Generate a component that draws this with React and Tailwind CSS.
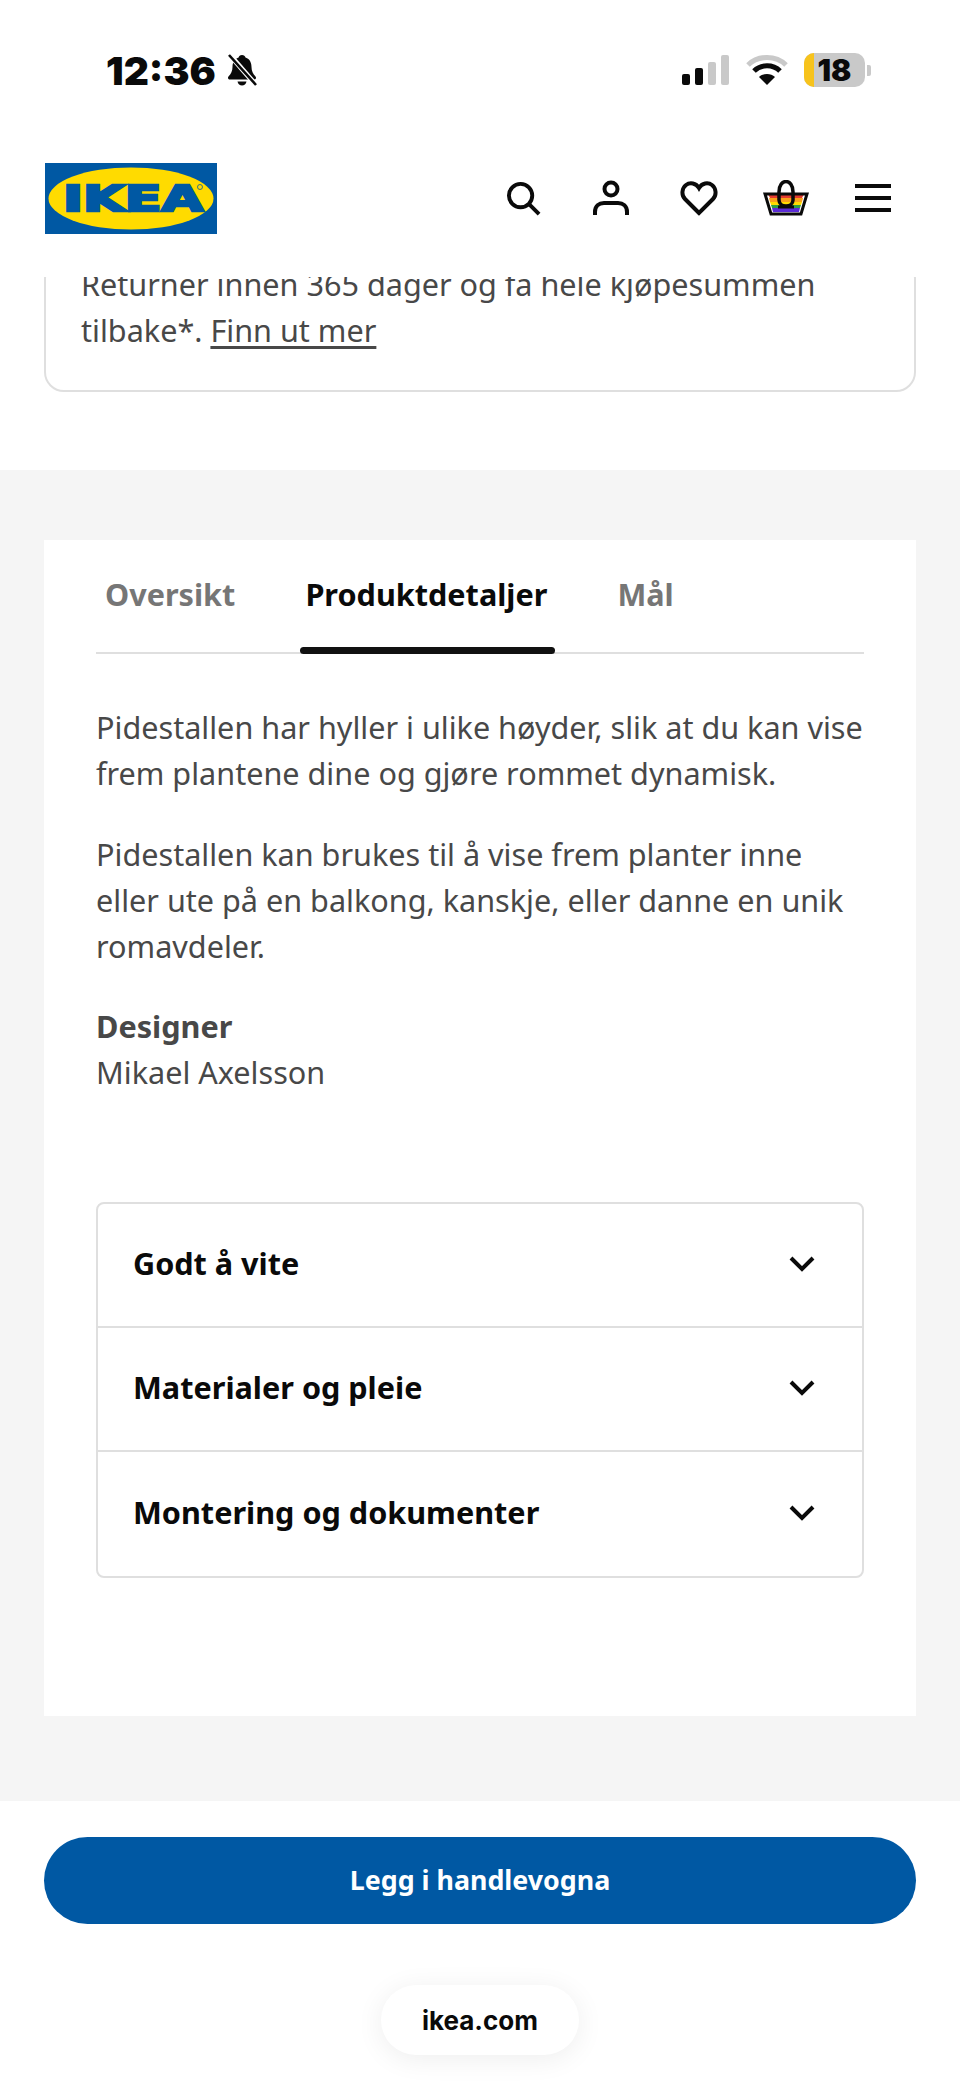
import React from 'react';

const BellOff = () => (
  <svg width="34" height="36" viewBox="0 0 34 36" className="ml-[9px]">
    <path d="M17 3c-2 0-3 1-3.400 2.500C9 7 7.500 11 7.500 15c0 4-1.500 7-4 9.500-1 1-.5 3 1.500 3h24c2 0 2.500-2 1.500-3-2.500-2.500-4-5.500-4-9.500 0-4-1.500-8-6-9.500C20 4 19 3 17 3z" fill="#0a0a0a" />
    <path d="M12.500 29.500h9c-.5 2.500-2.300 4-4.500 4s-4-1.500-4.500-4z" fill="#0a0a0a" />
    <path d="M4 2l27 31" stroke="#fff" strokeWidth="5" />
    <path d="M4 3l27 30" stroke="#0a0a0a" strokeWidth="2.600" />
  </svg>
);

const StatusIcons = () => (
  <div className="flex items-center">
    <div className="flex items-end gap-[5px] h-[30px]">
      <div className="w-[8px] h-[11px] rounded-[2px] bg-[#0a0a0a]" />
      <div className="w-[8px] h-[17px] rounded-[2px] bg-[#0a0a0a]" />
      <div className="w-[8px] h-[23px] rounded-[2px] bg-[#c9c9c9]" />
      <div className="w-[8px] h-[30px] rounded-[2px] bg-[#c9c9c9]" />
    </div>
    <svg width="42" height="32" viewBox="0 0 42 32" className="ml-[17px]">
      <path d="M2 11C12 1 30 1 40 11" fill="none" stroke="#c9c9c9" strokeWidth="5" />
      <path d="M8 17c7-7 19-7 26 0" fill="none" stroke="#0a0a0a" strokeWidth="5" />
      <path d="M21 31l-8-8c4-4 12-4 16 0z" fill="#0a0a0a" />
    </svg>
    <div className="ml-[16px] relative flex items-center justify-center w-[61px] h-[34px] rounded-[10px] bg-[#c9c9c9] overflow-hidden">
      <div className="absolute left-0 top-0 bottom-0 w-[10px] bg-[#f7c31c]" />
      <span className="relative font-['Inter',sans-serif] font-black text-[30px] leading-none text-[#0a0a0a]">18</span>
    </div>
    <div className="ml-[2px] w-[4px] h-[11px] rounded-r-[2px] bg-[#c9c9c9]" />
  </div>
);

const IkeaLogo = () => (
  <svg width="172" height="71" viewBox="0 0 172 71" className="block">
    <rect width="172" height="71" fill="#0058a3" />
    <ellipse cx="86" cy="35.500" rx="82.500" ry="31" fill="#ffdb00" />
    <text x="18" y="48" textLength="140" lengthAdjust="spacingAndGlyphs" fontFamily="'DejaVu Sans', sans-serif" fontWeight="700" fontSize="35" fill="#0058a3" stroke="#0058a3" strokeWidth="2.500">IKEA</text>
    <circle cx="155" cy="24" r="2.500" fill="none" stroke="#0058a3" strokeWidth="0.800" />
  </svg>
);

const NavIcons = () => (
  <div className="flex items-center">
    <svg width="35" height="35" viewBox="0 0 36 36" fill="none" stroke="#0a0a0a" strokeWidth="4">
      <circle cx="15" cy="15" r="12" />
      <path d="M23.500 23.500L34 34" />
    </svg>
    <svg width="36" height="36" viewBox="0 0 36 36" fill="none" stroke="#0a0a0a" strokeWidth="4" className="ml-[52px]">
      <circle cx="18" cy="9" r="6.500" />
      <path d="M2 35v-3c0-6 4-9 9-9h14c5 0 9 3 9 9v3" />
    </svg>
    <svg width="38" height="36" viewBox="0 0 38 36" fill="none" stroke="#0a0a0a" strokeWidth="4" className="ml-[51px]">
      <path d="M19 33L5 19C1 15 2 8 6 5c4-3 10-2 13 3 3-5 9-6 13-3 4 3 5 10 1 14z" />
    </svg>
    <svg width="46" height="36" viewBox="0 0 46 36" className="ml-[45px]">
      <path d="M5 14h36l-2 4H7z" fill="#e53b2f" />
      <path d="M6 18h34l-1 4H7z" fill="#f9a11b" />
      <path d="M7 22h32l-1 3H8z" fill="#ffdb00" />
      <path d="M8 25h30l-1 3H9z" fill="#2f9e44" />
      <path d="M9 28h28l-1 4H10z" fill="#5b2bd6" />
      <path d="M2 14h42l-6 20H8z" fill="none" stroke="#0a0a0a" strokeWidth="3" />
      <path d="M15 27h16" stroke="#0a0a0a" strokeWidth="3" />
      <path d="M16 12c0-14 14-14 14 0v8c0 8-14 8-14 0z" fill="none" stroke="#0a0a0a" strokeWidth="3.500" />
    </svg>
    <div className="ml-[46px] flex flex-col gap-[8px] w-[36px]">
      <div className="h-[4px] bg-[#0a0a0a]" />
      <div className="h-[4px] bg-[#0a0a0a]" />
      <div className="h-[4px] bg-[#0a0a0a]" />
    </div>
  </div>
);

const Chevron = () => (
  <svg width="26" height="16" viewBox="0 0 26 16" fill="none" stroke="#0a0a0a" strokeWidth="4">
    <path d="M2 2l11 11L24 2" />
  </svg>
);

const AccordionRow = ({ title, last }) => (
  <div className={`h-[124px] flex items-center justify-between pl-[35px] pr-[47px] pb-[2px] ${last ? '' : 'border-b-2 border-[#dfdfdf]'}`}>
    <span className="text-[30.600px] font-bold text-[#0a0a0a]">{title}</span>
    <Chevron />
  </div>
);

export default function App() {
  return (
    <div className="w-[960px] h-[2086px] bg-white overflow-hidden font-['Noto_Sans',sans-serif]">
      <div className="h-[130px] flex items-center justify-between pl-[106px] pr-[89px] pt-[10px]">
        <div className="flex items-center">
          <span className="font-['Inter',sans-serif] font-black text-[39px] leading-none text-[#0a0a0a]">12:36</span>
          <BellOff />
        </div>
        <StatusIcons />
      </div>

      <div className="h-[147px] flex items-center justify-between pl-[45px] pr-[69px] pb-[11px]">
        <IkeaLogo />
        <NavIcons />
      </div>

      <div className="h-[193px] overflow-hidden px-[44px]">
        <div className="-mt-[18px] h-[133px] border-2 border-[#dfdfdf] rounded-[20px] pl-[35px] text-[30.600px] leading-[46px] text-[#484848]">
          <p className="whitespace-nowrap">Returner innen 365 dager og få hele kjøpesummen</p>
          <p>tilbake*. <span className="underline underline-offset-[4px]">Finn ut mer</span></p>
        </div>
      </div>

      <div className="h-[1331px] bg-[#f5f5f5] px-[44px] pt-[70px]">
        <div className="h-[1176px] bg-white px-[52px]">
          <div className="relative h-[114px] border-b-2 border-[#dfdfdf] flex items-center gap-[70px] pl-[9px] pb-[3px] text-[30.600px] font-bold">
            <span className="text-[#767676]">Oversikt</span>
            <span className="text-[#0a0a0a]">Produktdetaljer</span>
            <span className="text-[#767676]">Mål</span>
            <div className="absolute left-[204px] -bottom-[2px] w-[255px] h-[7px] rounded-full bg-[#111111]" />
          </div>

          <div className="pt-[50px] text-[30.600px] leading-[46px] text-[#484848]">
            <p>Pidestallen har hyller i ulike høyder, slik at du kan vise frem plantene dine og gjøre rommet dynamisk.</p>
            <p className="mt-[35px]">Pidestallen kan brukes til å vise frem planter inne eller ute på en balkong, kanskje, eller danne en unik romavdeler.</p>
            <p className="mt-[34px] font-bold">Designer</p>
            <p>Mikael Axelsson</p>
          </div>

          <div className="mt-[107px] border-2 border-[#dfdfdf] rounded-[8px]">
            <AccordionRow title="Godt å vite" />
            <AccordionRow title="Materialer og pleie" />
            <AccordionRow title="Montering og dokumenter" last />
          </div>
        </div>
      </div>

      <div className="px-[44px] pt-[36px]">
        <div className="h-[87px] rounded-full bg-[#0058a3] flex items-center justify-center text-white text-[26.800px] font-bold">
          Legg i handlevogna
        </div>
        <div className="mt-[61px] mx-auto w-[198px] h-[70px] rounded-full bg-white shadow-[0_4px_28px_rgba(0,0,0,0.07)] flex items-center justify-center font-['Inter',sans-serif] font-bold text-[26px] text-[#0a0a0a]">
          ikea.com
        </div>
      </div>
    </div>
  );
}
